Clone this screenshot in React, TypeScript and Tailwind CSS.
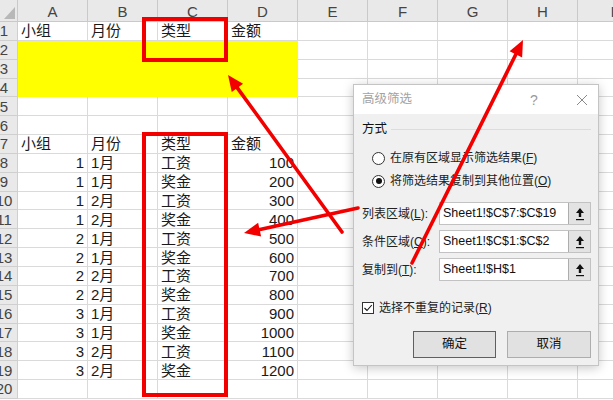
import type { FC, ReactNode } from 'react';

const COLS = ['A', 'B', 'C', 'D', 'E', 'F', 'G', 'H', 'I'];
const TYPES = ['工资', '奖金'];

type Cell = { text: string; right?: boolean };

// rows 1..20, columns A..D hold data
const buildRows = (): Record<number, Cell[]> => {
  const head: Cell[] = [{ text: '小组' }, { text: '月份' }, { text: '类型' }, { text: '金额' }];
  const rows: Record<number, Cell[]> = { 1: head, 7: head };
  for (let i = 0; i < 12; i++) {
    rows[8 + i] = [
      { text: String(Math.floor(i / 4) + 1), right: true },
      { text: i % 4 < 2 ? '1月' : '2月' },
      { text: TYPES[i % 2] },
      { text: String((i + 1) * 100), right: true },
    ];
  }
  return rows;
};

const ROWS = buildRows();
const font = { fontFamily: '"Liberation Sans", "Noto Sans CJK SC", sans-serif' };

const Arrow: FC<{ x1: number; y1: number; x2: number; y2: number }> = ({ x1, y1, x2, y2 }) => {
  const len = Math.hypot(x2 - x1, y2 - y1);
  const dx = (x2 - x1) / len;
  const dy = (y2 - y1) / len;
  const L = 16;
  const W = 7;
  const bx = x2 - dx * L;
  const by = y2 - dy * L;
  const pts = `${x2},${y2} ${bx - dy * W},${by + dx * W} ${bx + dy * W},${by - dx * W}`;
  return (
    <g>
      <line x1={x1} y1={y1} x2={bx + dx * 2} y2={by + dy * 2} stroke="#f20000" strokeWidth={3.6} strokeLinecap="round" />
      <polygon points={pts} fill="#f20000" />
    </g>
  );
};

const UpButton: FC = () => (
  <div className="w-[22px] h-full shrink-0 bg-[#e3e3e3] border-l border-[#adadad] flex items-center justify-center">
    <svg width="10" height="14" viewBox="0 0 10 14">
      <polygon points="5,1 9,6 6.2,6 6.2,10 3.8,10 3.8,6 1,6" fill="#111" />
      <rect x="1" y="12" width="8" height="1.2" fill="#111" />
    </svg>
  </div>
);

const Field: FC<{ label: ReactNode; value: string }> = ({ label, value }) => (
  <div className="flex items-center h-[23px] mt-[5px] first:mt-[13px]">
    <div className="w-[77px] shrink-0 text-[12px] text-[#222] leading-none">{label}</div>
    <div className="flex-1 h-full flex bg-white border border-[#c2c2c2]">
      <div className="flex-1 flex items-center pl-[3px] text-[12.5px] text-[#111] leading-none">{value}</div>
      <UpButton />
    </div>
  </div>
);

const Radio: FC<{ checked?: boolean; children: ReactNode; first?: boolean }> = ({ checked, children, first }) => (
  <div className={`flex items-center h-[16px] pl-[10px] gap-[5px] ${first ? 'mt-[14px]' : 'mt-[7px]'}`}>
    <div className="w-[13px] h-[13px] rounded-full border border-[#333] bg-white flex items-center justify-center">
      {checked && <div className="w-[6px] h-[6px] rounded-full bg-[#111]" />}
    </div>
    <span className="text-[12px] text-[#222] leading-none">{children}</span>
  </div>
);

const Dialog: FC = () => (
  <div
    className="absolute left-[353px] top-[84px] w-[246px] h-[282px] flex flex-col border border-[#c4c4c4] shadow-[0_2px_10px_rgba(0,0,0,0.22)]"
    style={{ fontFamily: '"Liberation Sans", "Noto Sans CJK SC", sans-serif' }}
  >
    <div className="h-[29px] shrink-0 bg-white flex items-center pl-[8px]">
      <span className="text-[12.5px] text-[#a3a3a3] leading-none">高级筛选</span>
      <span className="ml-[118px] text-[14px] text-[#9a9a9a] leading-none">?</span>
      <svg className="ml-[38px]" width="12" height="12" viewBox="0 0 12 12">
        <path d="M1 1 L11 11 M11 1 L1 11" stroke="#8a8a8a" strokeWidth="1" />
      </svg>
    </div>
    <div className="flex-1 bg-[#f0f0f0] pl-[8px] pr-[7px] flex flex-col">
      <div className="flex items-center h-[14px] mt-[8px]">
        <span className="text-[12.5px] text-[#111] leading-none">方式</span>
        <div className="flex-1 h-px bg-[#dcdcdc] ml-[4px]" />
      </div>
      <Radio first>
        在原有区域显示筛选结果(<u>F</u>)
      </Radio>
      <Radio checked>
        将筛选结果复制到其他位置(<u>O</u>)
      </Radio>
      <div className="flex flex-col">
        <Field label={<>列表区域(<u>L</u>):</>} value="Sheet1!$C$7:$C$19" />
        <Field label={<>条件区域(<u>C</u>):</>} value="Sheet1!$C$1:$C$2" />
        <Field label={<>复制到(<u>T</u>):</>} value="Sheet1!$H$1" />
      </div>
      <div className="flex items-center h-[13px] mt-[20px] gap-[5px]">
        <div className="w-[12px] h-[12px] border border-[#333] bg-white flex items-center justify-center">
          <svg width="10" height="10" viewBox="0 0 10 10">
            <path d="M1.5 5 L4 7.5 L8.8 2" fill="none" stroke="#111" strokeWidth="1.1" />
          </svg>
        </div>
        <span className="text-[12px] text-[#222] leading-none">
          选择不重复的记录(<u>R</u>)
        </span>
      </div>
      <div className="flex justify-end gap-[11px] mt-[17px]">
        <button className="w-[83px] h-[27px] bg-[#e1e1e1] border border-[#0078d7] text-[12.5px] text-[#111] leading-none">
          确定
        </button>
        <button className="w-[84px] h-[27px] bg-[#e1e1e1] border border-[#adadad] text-[12.5px] text-[#111] leading-none">
          取消
        </button>
      </div>
    </div>
  </div>
);

const Sheet: FC = () => (
  <div className="flex flex-col" style={font}>
    <div className="flex h-[22px] shrink-0 bg-[#e9e9e9]">
      <div className="w-[18px] shrink-0 border-r border-b border-[#c9c9c9] flex items-end">
        <svg width="17" height="21" viewBox="0 0 17 21">
          <polygon points="4,19 15,19 15,7" fill="#b8b8b8" />
        </svg>
      </div>
      {COLS.map((c) => (
        <div
          key={c}
          className="w-[70px] shrink-0 border-r border-b border-[#c9c9c9] flex items-center justify-center text-[15px] text-[#444] leading-none pt-[2px]"
        >
          {c}
        </div>
      ))}
    </div>
    {Array.from({ length: 20 }, (_, r) => {
      const n = r + 1;
      const data = ROWS[n] || [];
      const yellow = n >= 2 && n <= 4;
      return (
        <div key={n} className="flex h-[18.85px] shrink-0">
          <div className="w-[18px] shrink-0 overflow-hidden bg-[#e9e9e9] border-r border-b border-[#cfcfcf] flex items-center">
            <div className="w-[28px] -ml-[10px] shrink-0 text-center text-[15px] text-[#444] leading-none">{n}</div>
          </div>
          {COLS.map((c, ci) => {
            const cell = data[ci];
            const fill = yellow && ci < 4;
            return (
              <div
                key={c}
                className={`w-[70px] shrink-0 border-r border-b px-[3px] flex items-center text-[15px] text-[#1a1a1a] leading-none whitespace-nowrap ${
                  fill ? 'bg-[#ffff00] border-[#ffff00]' : 'border-[#dadada]'
                } ${cell?.right ? 'justify-end' : 'justify-start'}`}
              >
                {cell?.text}
              </div>
            );
          })}
        </div>
      );
    })}
  </div>
);

const App: FC = () => (
  <div className="relative w-[613px] h-[400px] overflow-hidden bg-white">
    <Sheet />
    <div className="absolute left-[142px] top-[17px] w-[86px] h-[45px] border-4 border-[#f20000]" />
    <div className="absolute left-[142px] top-[132px] w-[86px] h-[265px] border-4 border-[#f20000]" />
    <Dialog />
    <svg className="absolute inset-0 pointer-events-none" width="613" height="400">
      <Arrow x1={342} y1={232} x2={228} y2={75} />
      <Arrow x1={358} y1={208} x2={244} y2={233} />
      <Arrow x1={412} y1={263} x2={523} y2={40} />
    </svg>
  </div>
);

export default App;
